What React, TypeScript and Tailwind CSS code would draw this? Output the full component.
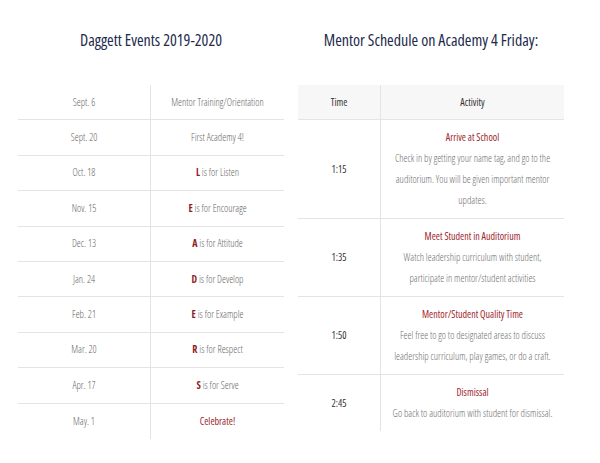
const events = [
  { date: "Sept. 6", letter: "", rest: "Mentor Training/Orientation" },
  { date: "Sept. 20", letter: "", rest: "First Academy 4!" },
  { date: "Oct. 18", letter: "L", rest: " is for Listen" },
  { date: "Nov. 15", letter: "E", rest: " is for Encourage" },
  { date: "Dec. 13", letter: "A", rest: " is for Attitude" },
  { date: "Jan. 24", letter: "D", rest: " is for Develop" },
  { date: "Feb. 21", letter: "E", rest: " is for Example" },
  { date: "Mar. 20", letter: "R", rest: " is for Respect" },
  { date: "Apr. 17", letter: "S", rest: " is for Serve" },
];

const schedule = [
  {
    time: "1:15",
    title: "Arrive at School",
    lines: [
      "Check in by getting your name tag, and go to the",
      "auditorium. You will be given important mentor",
      "updates.",
    ],
  },
  {
    time: "1:35",
    title: "Meet Student in Auditorium",
    lines: ["Watch leadership curriculum with student,", "participate in mentor/student activities"],
  },
  {
    time: "1:50",
    title: "Mentor/Student Quality Time",
    lines: ["Feel free to go to designated areas to discuss", "leadership curriculum, play games, or do a craft."],
  },
  {
    time: "2:45",
    title: "Dismissal",
    lines: ["Go back to auditorium with student for dismissal."],
  },
];

export default function App() {
  return (
    <div className="h-[463px] w-[600px] bg-white font-['Open_Sans',sans-serif] [font-stretch:condensed]">
      <div className="flex gap-[14px] pl-[18px]">
        <div className="w-[266px]">
          <h2 className="pt-[28px] text-center text-[16px] font-medium leading-[24px] text-[#1d2a4d]">
            Daggett Events 2019-2020
          </h2>
          <div className="mt-[33px]">
            {events.map((e) => (
              <div key={e.date} className="flex h-[35.4px] border-b border-[#e4e4e4] text-[10px] font-light text-[#666]">
                <div className="flex w-[133px] items-center justify-center border-r border-[#e4e4e4]">{e.date}</div>
                <div className="flex flex-1 items-center justify-center">
                  {e.letter && <span className="font-bold text-[#8e1f2a]">{e.letter}</span>}
                  <span className="whitespace-pre">{e.rest}</span>
                </div>
              </div>
            ))}
            <div className="flex h-[35px] text-[10px]">
              <div className="flex w-[133px] items-center justify-center border-r border-[#e4e4e4] font-light text-[#666]">May. 1</div>
              <div className="flex flex-1 items-center justify-center font-medium text-[#9a262e]">Celebrate!</div>
            </div>
          </div>
        </div>

        <div className="w-[266px]">
          <h2 className="pt-[28px] text-center text-[16px] font-medium leading-[24px] text-[#1d2a4d]">
            Mentor Schedule on Academy 4 Friday:
          </h2>
          <div className="mt-[33px] text-[10px]">
            <div className="flex h-[35px] border-b border-[#e4e4e4] bg-[#f7f7f7] text-[#333]">
              <div className="flex w-[83px] items-center justify-center border-r border-[#e4e4e4]">Time</div>
              <div className="flex flex-1 items-center justify-center">Activity</div>
            </div>
            {schedule.map((s, i) => (
              <div
                key={s.time}
                className={`flex ${i < schedule.length - 1 ? "border-b border-[#e4e4e4]" : ""}`}
              >
                <div className="flex w-[83px] items-center justify-center border-r border-[#e4e4e4] text-[#333]">
                  {s.time}
                </div>
                <div className="flex-1 whitespace-nowrap py-[7px] text-center leading-[21px]">
                  <div className="font-normal text-[#a0282e]">{s.title}</div>
                  {s.lines.map((l) => (
                    <div key={l} className="font-light text-[#6e6e6e]">{l}</div>
                  ))}
                </div>
              </div>
            ))}
          </div>
        </div>
      </div>
    </div>
  );
}
